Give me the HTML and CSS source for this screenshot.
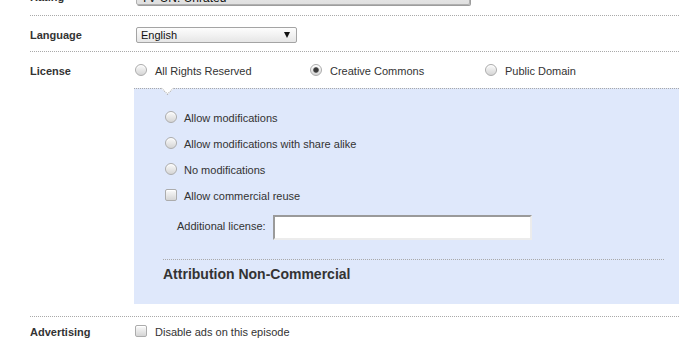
FILE: index.html
```html
<!DOCTYPE html>
<html lang="en">

<head>
    <meta charset="UTF-8" />
    <meta name="viewport" content="width=device-width, initial-scale=1.0" />
    <title>Episode Settings</title>
    <link rel="stylesheet" href="styles.css">
</head>

<body>

    <div class="form">
        <div class="row row-rating">
            <div class="label">Rating</div>
            <div class="field">
                <div class="select select-wide">TV-UN: Unrated</div>
            </div>
        </div>

        <div class="row">
            <div class="label">Language</div>
            <div class="field">
                <div class="select">
                    <span>English</span>
                    <span class="arrow"></span>
                </div>
            </div>
        </div>

        <div class="row row-license">
            <div class="label">License</div>
            <div class="field">
                <div class="choices">
                    <label class="choice"><input type="radio" name="license" /> All Rights Reserved</label>
                    <label class="choice"><input type="radio" name="license" checked /> Creative Commons</label>
                    <label class="choice"><input type="radio" name="license" /> Public Domain</label>
                </div>

                <div class="cc-panel">
                    <span class="notch"></span>
                    <label class="option"><input type="radio" name="mods" /> Allow modifications</label>
                    <label class="option"><input type="radio" name="mods" /> Allow modifications with share alike</label>
                    <label class="option"><input type="radio" name="mods" /> No modifications</label>
                    <label class="option"><input type="checkbox" /> Allow commercial reuse</label>

                    <div class="extra">
                        <label for="extra">Additional license:</label>
                        <input type="text" id="extra" />
                    </div>

                    <h3 class="cc-name">Attribution Non-Commercial</h3>
                </div>
            </div>
        </div>

        <div class="row row-ads">
            <div class="label">Advertising</div>
            <div class="field">
                <label class="choice"><input type="checkbox" /> Disable ads on this episode</label>
            </div>
        </div>
    </div>

</body>

</html>
```

FILE: styles.css
```css
* {
    margin: 0;
    padding: 0;
    box-sizing: border-box;
}

body {
    background: #fff;
    color: #333;
    font-family: 'Liberation Sans', Arial, sans-serif;
    font-size: 11px;
    overflow: hidden;
}

.form {
    margin-left: 30px;
    width: 649px;
}

.row {
    display: grid;
    grid-template-columns: 104px 545px;
    padding: 11px 0 8px;
    border-bottom: 1px dotted #a9a9a9;
}

.row-rating {
    margin-top: -15px;
    padding: 0 0 10px;
}

.row-rating .label {
    line-height: 16px;
    padding-top: 4px;
}

.row-license {
    padding: 11px 0 12px;
}

.row-ads {
    padding: 7px 0 8px;
}

.label {
    font-weight: bold;
    line-height: 16px;
}

/* fake selects */
.select {
    display: flex;
    align-items: center;
    justify-content: space-between;
    width: 161px;
    height: 16px;
    margin-left: 2px;
    padding: 0 6px 0 4px;
    border: 1px solid #a4a4a4;
    border-radius: 2px;
    background: linear-gradient(#fdfdfd, #e6e6e6);
    color: #111;
    font-size: 11px;
}

.select-wide {
    width: 334px;
    height: 20px;
    padding-top: 5px;
    border-color: #b0b0b0;
    box-shadow: 1px 1px 0 #9d9d9d;
    background: linear-gradient(#ececec, #e0e0e0);
    font-size: 12px;
}

.arrow {
    width: 0;
    height: 0;
    border-left: 3px solid transparent;
    border-right: 3px solid transparent;
    border-top: 6px solid #111;
}

/* radios and checkboxes */
input[type="radio"],
input[type="checkbox"] {
    appearance: none;
    -webkit-appearance: none;
    flex: none;
    width: 12px;
    height: 12px;
    margin: 0 0 3px;
    border: 1px solid #acacac;
    background: linear-gradient(#fafafa, #d5d5d5);
    box-shadow: inset 0 1px 1px #fff;
}

input[type="radio"] {
    border-radius: 50%;
}

input[type="checkbox"] {
    border-radius: 2px;
}

input[type="radio"]:checked {
    background: radial-gradient(circle, #3a3a3a 0 2px, #777 2.6px, transparent 3.2px),
        linear-gradient(#fafafa, #d5d5d5);
}

.choices {
    display: flex;
    margin-bottom: 9px;
}

.choice {
    display: flex;
    align-items: center;
    gap: 8px;
    width: 175px;
    padding-left: 1px;
    line-height: 16px;
}

.cc-panel {
    position: relative;
    display: flex;
    flex-direction: column;
    padding: 16px 15px 22px 29px;
    background: #dfe8fb;
    border-top: 1px dotted #a9a9a9;
}

.notch {
    position: absolute;
    top: -5px;
    left: 29px;
    width: 9px;
    height: 9px;
    background: #fff;
    border-right: 1px dotted #a9a9a9;
    border-bottom: 1px dotted #a9a9a9;
    transform: rotate(45deg);
}

.option {
    display: flex;
    align-items: center;
    gap: 7px;
    height: 26px;
    padding-left: 2px;
}

.extra {
    display: flex;
    align-items: center;
    gap: 7px;
    margin-top: 6px;
    padding-left: 14px;
}

.extra label {
    padding-bottom: 3px;
}

.extra input {
    width: 259px;
    height: 25px;
    border: 2px solid #ececec;
    border-top-color: #9a9a9a;
    border-left-color: #9a9a9a;
    background: #fff;
    outline: none;
}

.cc-name {
    margin-top: 19px;
    padding-top: 6px;
    border-top: 1px dotted #a9a9a9;
    font-size: 14px;
    line-height: 16px;
    color: #333;
}
```
